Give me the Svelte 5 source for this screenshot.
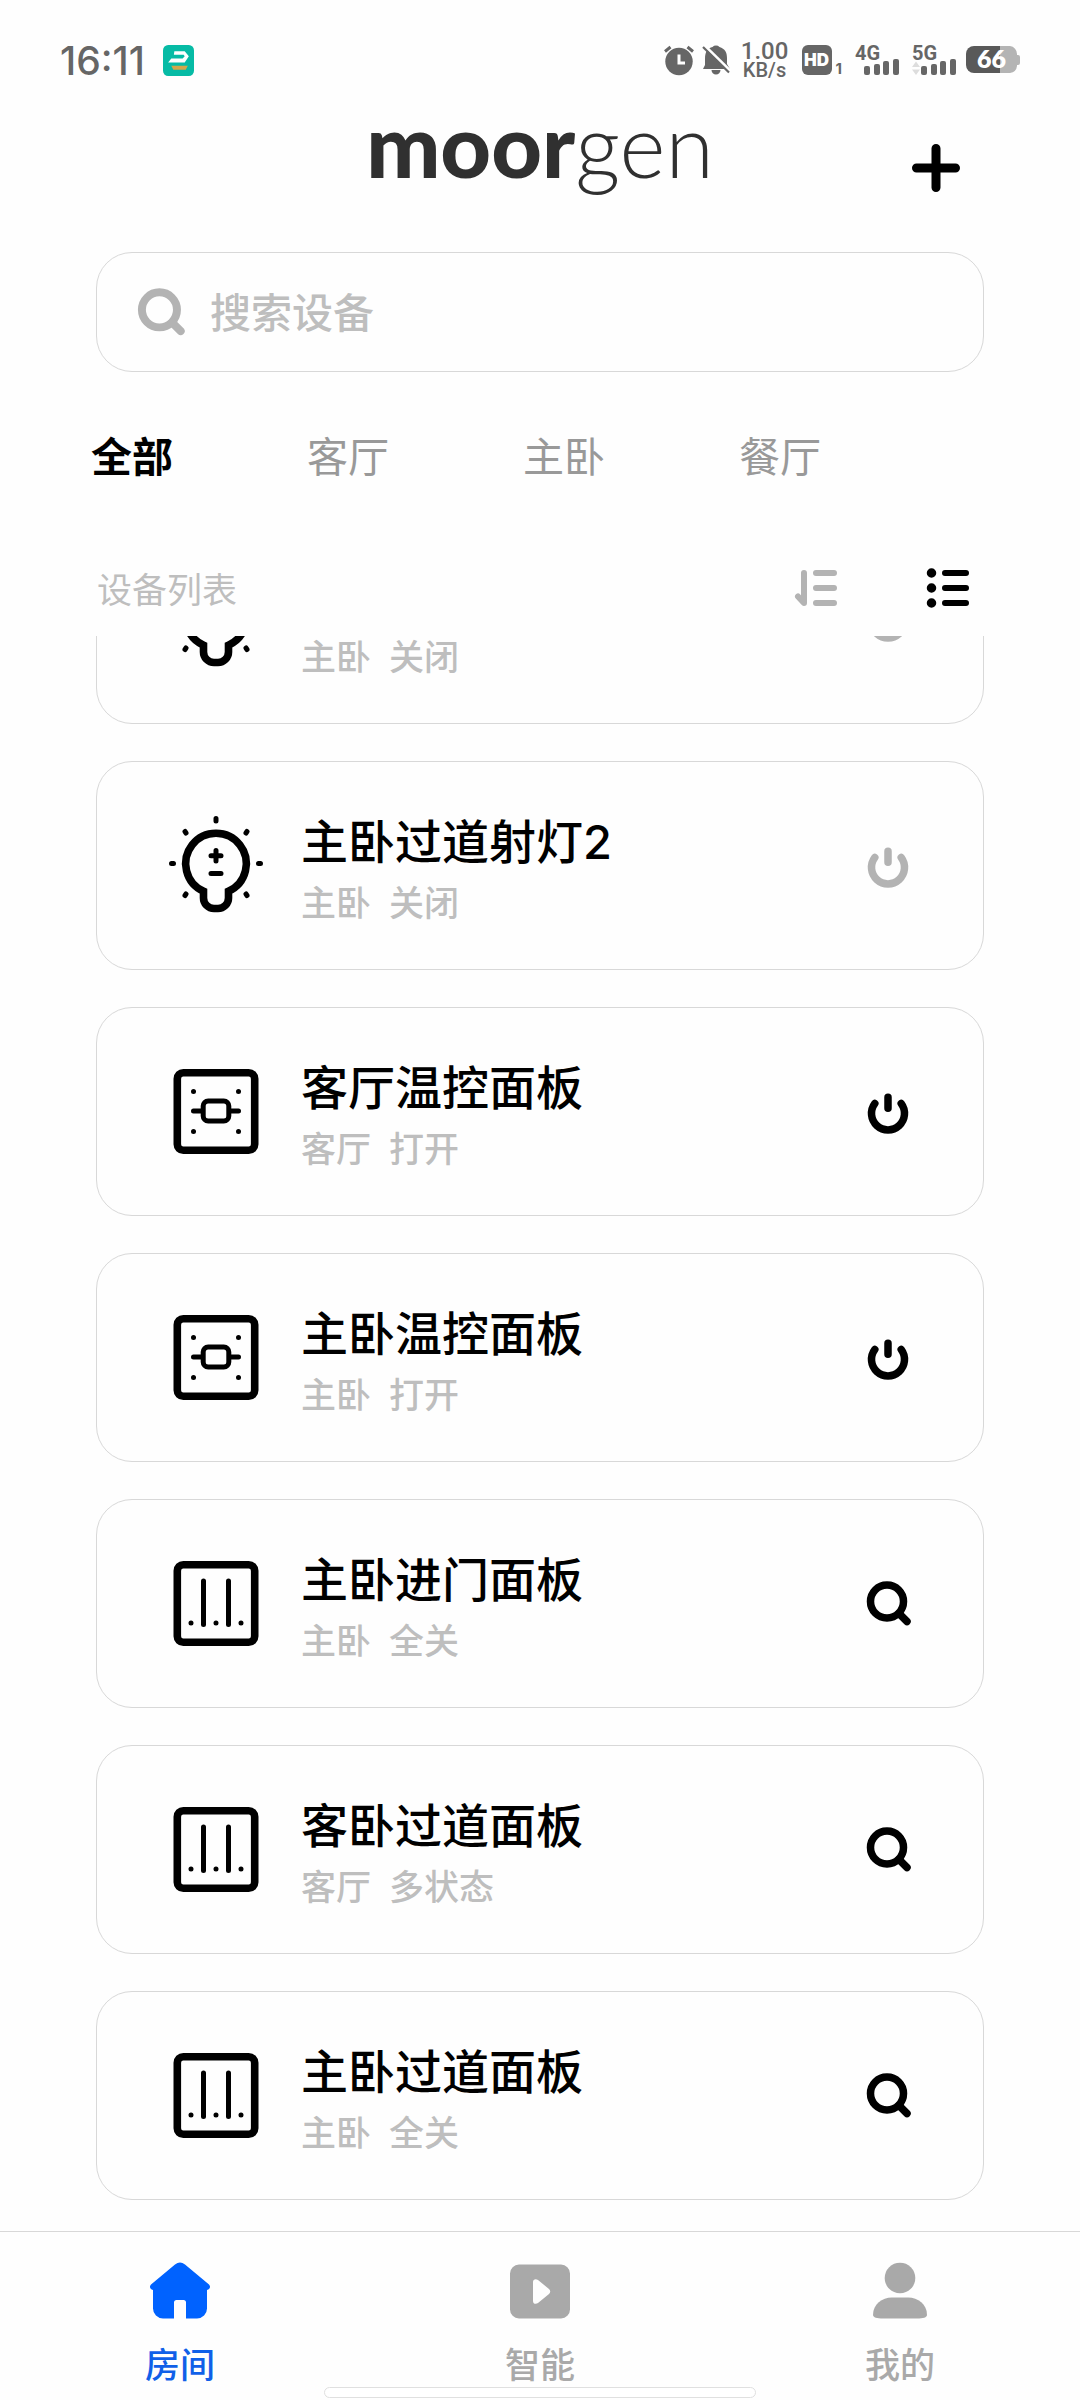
<script>
  const rooms = ['全部', '客厅', '主卧', '餐厅'];
  let activeRoom = $state('全部');
  let query = $state('');

  const devices = [
    { name: '主卧过道射灯1', room: '主卧', status: '关闭', icon: 'bulb', action: 'power', on: false },
    { name: '主卧过道射灯2', room: '主卧', status: '关闭', icon: 'bulb', action: 'power', on: false },
    { name: '客厅温控面板', room: '客厅', status: '打开', icon: 'thermostat', action: 'power', on: true },
    { name: '主卧温控面板', room: '主卧', status: '打开', icon: 'thermostat', action: 'power', on: true },
    { name: '主卧进门面板', room: '主卧', status: '全关', icon: 'switch', action: 'detail', on: true },
    { name: '客卧过道面板', room: '客厅', status: '多状态', icon: 'switch', action: 'detail', on: true },
    { name: '主卧过道面板', room: '主卧', status: '全关', icon: 'switch', action: 'detail', on: true }
  ];
</script>

{#snippet magnifier()}
  <svg class="magnifier" viewBox="0 0 48 48" aria-hidden="true">
    <circle cx="23" cy="21.5" r="16.5" />
    <path d="M35 33.5 43 41.5" />
  </svg>
{/snippet}

{#snippet signal(label, arrows)}
  <svg class="signal" viewBox="0 0 46 34" role="img" aria-label={label}>
    <text x="0" y="17">{label}</text>
    {#if arrows}
      <path class="faint" d="M0 24 4 18.500 8 24zM0 26.500h8l-4 5.500z" />
    {/if}
    <rect x="9" y="23" width="6" height="9" rx="2" />
    <rect x="19" y="21" width="6" height="11" rx="2" />
    <rect x="28" y="18" width="6" height="14" rx="2" />
    <rect x="38" y="16" width="6" height="16" rx="2" />
  </svg>
{/snippet}

<div class="app">
  <div class="status">
    <span class="time">16:11</span>
    <svg class="badge" viewBox="0 0 30 30" aria-hidden="true">
      <rect width="30" height="30" rx="5" fill="#06bba5" />
      <path d="M11 6h10l4 5-4 6H5l3-4h11l2-2-1-1.500h-9.500z" fill="#fff" />
      <path d="M8 20h16l-2 4H10z" fill="#d4a64a" />
    </svg>
    <div class="status-right">
      <svg class="alarm" viewBox="0 0 30 32" aria-hidden="true">
        <circle cx="15" cy="17.500" r="13.700" fill="#666" />
        <path d="M1 7.500 6.500 3M29 7.500 23.500 3" stroke="#666" stroke-width="3" />
        <path d="M15 10.500V19h6" fill="none" stroke="#fff" stroke-width="3" />
      </svg>
      <svg class="bell" viewBox="0 0 28 32" aria-hidden="true">
        <path d="M3 15C3 7 6 4 10.500 3a5 5 0 0 1 7 0C23 5 25 8 25 14v6l3 5H1l2-4zM9.500 26h9a4.500 4.500 0 0 1-9 0z" fill="#666" />
        <path d="M2.500 1.500 28.500 27" stroke="#fff" stroke-width="3" />
        <path d="M1 3 27 28.500" stroke="#666" stroke-width="2.200" />
      </svg>
      <div class="speed"><span class="rate">1.00</span><span class="unit">KB/s</span></div>
      <div class="hd"><span class="hd-box">HD</span><span class="hd-sim">1</span></div>
      {@render signal('4G', false)}
      {@render signal('5G', true)}
      <svg class="battery" viewBox="0 0 54 28" role="img" aria-label="66">
        <path d="M34 0h10a8 8 0 0 1 7 8v1h1a2 2 0 0 1 2 2v6a2 2 0 0 1-2 2h-1v1a8 8 0 0 1-7 7H34z" fill="#b4b4b4" />
        <path d="M34 0H8a8 8 0 0 0-8 8v11a8 8 0 0 0 8 8h26z" fill="#595959" />
        <text x="25.500" y="22" text-anchor="middle">66</text>
      </svg>
    </div>
  </div>

  <header>
    <h1><b>moor</b><span>gen</span></h1>
    <button class="add" aria-label="添加设备">
      <svg viewBox="0 0 48 48" aria-hidden="true"><path d="M24 4.500v39M4.500 24h39" /></svg>
    </button>
  </header>

  <label class="search">
    {@render magnifier()}
    <input type="text" placeholder="搜索设备" aria-label="搜索设备" bind:value={query} />
  </label>

  <nav class="rooms" aria-label="房间筛选">
    {#each rooms as room}
      <button class:active={room === activeRoom} onclick={() => (activeRoom = room)}>{room}</button>
    {/each}
  </nav>

  <div class="list-head">
    <h2>设备列表</h2>
    <button class="muted" aria-label="排序">
      <svg viewBox="0 0 48 48" aria-hidden="true">
        <path d="M12 9v30l-6-6.500M24 9h18M24 24h18M24 39h18" />
      </svg>
    </button>
    <button aria-label="列表视图">
      <svg viewBox="0 0 48 48" aria-hidden="true">
        <path d="M21 9h21M21 24h21M21 39h21" />
        <path class="dots" d="M7.500 9h.01M7.500 24h.01M7.500 39h.01" />
      </svg>
    </button>
  </div>

  <main>
    {#each devices as d}
      <article>
        <svg class="device" viewBox="0 0 96 100" aria-hidden="true">
          {#if d.icon === 'bulb'}
            <path
              class="thick"
              d="M35.500 75.200A30.300 30.300 0 1 1 60.500 75.200V82a10.500 10.500 0 0 1-10.500 10.500H46A10.500 10.500 0 0 1 35.500 82z"
            />
            <path d="M48 2.500v2.500M3.500 47.500h2M90.500 47.500h2M17 15.500l1 1.500M79 15.500l-1 1.500M17 79.500l1-1.500M79 79.500l-1-1.500" />
            <path d="M48 34.500v10.500M43 39.700h10M43 57.500h10" />
          {:else}
            <rect class="thick" x="9.300" y="10.800" width="77.400" height="77.400" rx="6" />
            {#if d.icon === 'thermostat'}
              <rect x="35.200" y="39" width="25.600" height="20" rx="5" />
              <path d="M25.500 49h9M61.500 49h9M25.500 29.500h.01M70.500 29.500h.01M25.500 69.500h.01M70.500 69.500h.01" />
            {:else}
              <path d="M35.500 27v43.500M60.500 27v43.500M23 69h.01M48 69h.01M73 69h.01" />
            {/if}
          {/if}
        </svg>
        <div class="info">
          <h3>{d.name}</h3>
          <p><span>{d.room}</span><span>{d.status}</span></p>
        </div>
        <button class:muted={!d.on} aria-label={d.action === 'power' ? '开关' : '查看'}>
          {#if d.action === 'power'}
            <svg viewBox="0 0 48 48" aria-hidden="true">
              <path class="power" d="M24 9.300v11M10.800 15.500a16.500 16.500 0 1 0 26.400 0" />
            </svg>
          {:else}
            {@render magnifier()}
          {/if}
        </button>
      </article>
    {/each}
  </main>

  <footer>
    <a href="#rooms" class="current">
      <svg viewBox="0 0 60 60" aria-hidden="true">
        <path
          d="M25 3.500a8 8 0 0 1 10 0L59 23.500c2 2 1 5-2 5.500V47.500a10 10 0 0 1-10 10H36V41.500q0-2.500-2.500-2.500h-7q-2.500 0-2.500 2.500V57.500H13a10 10 0 0 1-10-10V29C0 28.500-1 25.500 1 23.500z"
        />
      </svg>
      <span>房间</span>
    </a>
    <a href="#smart">
      <svg viewBox="0 0 60 60" aria-hidden="true">
        <path
          fill-rule="evenodd"
          d="M9 3.500h42a9 9 0 0 1 9 9v36a9 9 0 0 1-9 9H9a9 9 0 0 1-9-9v-36a9 9 0 0 1 9-9zM23 21v19c0 3 3 3.500 5 2l11-9q2.500-2.500 0-5L28 19c-2-1.500-5-1-5 2z"
        />
      </svg>
      <span>智能</span>
    </a>
    <a href="#mine">
      <svg viewBox="0 0 60 60" aria-hidden="true">
        <circle cx="30" cy="17" r="15.300" />
        <path d="M3 54C3 43 12 36.500 22 36.500h16c10 0 19 6.500 19 17.500 0 2.500-4 3.500-10 3.500H13C7 57.500 3 56.500 3 54z" />
      </svg>
      <span>我的</span>
    </a>
    <div class="handle"></div>
  </footer>
</div>

<style>
  :global(body) {
    margin: 0;
    background: #fefefe;
  }

  .app {
    display: flex;
    flex-direction: column;
    height: 100vh;
    overflow: hidden;
    color: #000;
    font-family: Inter, 'Noto Sans CJK SC', sans-serif;
  }

  h1,
  h2,
  h3,
  p {
    margin: 0;
  }

  button {
    padding: 0;
    border: 0;
    background: none;
    color: inherit;
    font: inherit;
    cursor: pointer;
  }

  svg {
    display: block;
    flex: none;
    overflow: visible;
  }

  .status {
    display: flex;
    align-items: center;
    height: 120px;
    padding: 0 60px;
    color: #666;
  }

  .time {
    font-size: 39px;
    font-weight: 500;
  }

  .badge {
    width: 31px;
    height: 31px;
    margin-left: 18px;
  }

  .status-right {
    display: flex;
    align-items: center;
    margin-left: auto;
  }

  .alarm {
    width: 30px;
    height: 32px;
  }

  .bell {
    width: 28px;
    height: 32px;
    margin-left: 8px;
  }

  .speed {
    display: flex;
    flex-direction: column;
    align-items: center;
    width: 48px;
    margin-left: 11px;
    font-family: Roboto, sans-serif;
    font-weight: 500;
  }

  .rate {
    font-size: 24px;
    line-height: 20px;
  }

  .unit {
    font-size: 20px;
    line-height: 18px;
  }

  .hd {
    display: flex;
    align-items: flex-end;
    gap: 4px;
    margin: 0 2px 0 13px;
  }

  .hd-box {
    width: 30px;
    border-radius: 6px;
    background: #666;
    color: #fff;
    font-size: 17px;
    font-weight: 900;
    line-height: 30px;
    text-align: center;
  }

  .hd-sim {
    font-size: 15px;
    font-weight: 700;
    line-height: 13px;
  }

  .signal {
    width: 46px;
    height: 34px;
    margin-left: 11px;
    fill: #666;
  }

  .signal text {
    font-size: 20px;
    font-weight: 700;
    font-family: Roboto, sans-serif;
  }

  .signal .faint {
    fill: #ddd;
  }

  .battery {
    width: 54px;
    height: 28px;
    margin-left: 8px;
  }

  .battery text {
    fill: #fff;
    font-size: 25px;
    font-weight: 800;
    font-family: Lato, sans-serif;
  }

  header {
    display: flex;
    justify-content: center;
    position: relative;
    height: 96px;
    margin-bottom: 36px;
  }

  h1 {
    color: #303030;
    font-family: Lato, sans-serif;
    font-size: 88px;
    line-height: 48px;
    white-space: nowrap;
  }

  h1 b {
    font-weight: 900;
  }

  h1 span {
    font-weight: 300;
  }

  .add {
    position: absolute;
    right: 120px;
    top: 24px;
  }

  .add svg {
    width: 48px;
    height: 48px;
    fill: none;
    stroke: #000;
    stroke-width: 9;
    stroke-linecap: round;
  }

  .search {
    display: flex;
    align-items: center;
    gap: 24px;
    box-sizing: border-box;
    height: 120px;
    flex: none;
    margin: 0 96px;
    padding: 0 38px;
    border: 1px solid #d8d8d8;
    border-radius: 36px;
    color: #b3b3b3;
  }

  .search input {
    flex: 1;
    min-width: 0;
    padding: 2px 0 0;
    border: 0;
    outline: 0;
    background: none;
    color: #000;
    font: inherit;
    font-size: 41px;
    font-weight: 500;
  }

  .search input::placeholder {
    color: #bebebe;
    opacity: 1;
  }

  .magnifier {
    width: 48px;
    height: 48px;
    fill: none;
    stroke: currentColor;
    stroke-width: 7.5;
    stroke-linecap: round;
  }

  .search :global(.magnifier) {
    width: 51px;
    height: 51px;
  }

  .rooms {
    display: grid;
    grid-template-columns: repeat(4, 20vw);
    flex: none;
    padding: 55px 24px 53px;
  }

  .rooms button {
    color: #999;
    font-size: 41px;
    line-height: 60px;
  }

  .rooms .active {
    color: #000;
    font-weight: 700;
  }

  .list-head {
    display: flex;
    align-items: center;
    flex: none;
    gap: 84px;
    height: 96px;
    padding: 0 108px 0 97px;
  }

  .list-head h2 {
    margin-right: auto;
    padding-bottom: 2px;
    color: #bebebe;
    font-size: 35px;
    font-weight: 400;
  }

  .list-head svg {
    width: 48px;
    height: 48px;
    fill: none;
    stroke: currentColor;
    stroke-width: 6;
    stroke-linecap: round;
    stroke-linejoin: round;
  }

  .list-head .dots {
    stroke-width: 9.5;
  }

  button.muted {
    color: #b3b3b3;
  }

  main {
    display: flex;
    flex: 1;
    flex-direction: column;
    justify-content: flex-end;
    gap: 37px;
    min-height: 0;
    overflow: hidden;
    padding: 0 96px 31px;
  }

  article {
    display: flex;
    align-items: center;
    gap: 37px;
    box-sizing: border-box;
    height: 209px;
    flex: none;
    padding: 0 71px;
    border: 1px solid #d8d8d8;
    border-radius: 36px;
  }

  .device {
    width: 96px;
    height: 100px;
    fill: none;
    stroke: #000;
    stroke-width: 5;
    stroke-linecap: round;
  }

  .thick {
    stroke-width: 7.6;
  }

  .info {
    display: flex;
    flex: 1;
    flex-direction: column;
    gap: 12px;
    padding-top: 13px;
  }

  h3 {
    font-size: 47px;
    font-weight: 500;
    line-height: 50px;
  }

  p {
    display: flex;
    gap: 18px;
    color: #bebebe;
    font-size: 35px;
    font-weight: 500;
    line-height: 48px;
  }

  article button svg {
    width: 48px;
    height: 48px;
  }

  .power {
    fill: none;
    stroke: currentColor;
    stroke-width: 7.5;
    stroke-linecap: round;
  }

  footer {
    display: flex;
    position: relative;
    box-sizing: border-box;
    height: 169px;
    flex: none;
    border-top: 1px solid #d8d8d8;
  }

  footer a {
    display: flex;
    flex: 1;
    flex-direction: column;
    align-items: center;
    gap: 20px;
    padding-top: 29px;
    color: #a9a9a9;
    fill: #a9a9a9;
    font-size: 35px;
    font-weight: 500;
    line-height: 48px;
    text-decoration: none;
  }

  footer .current {
    color: #1060e8;
    fill: #0062ff;
  }

  footer svg {
    width: 60px;
    height: 60px;
  }

  .handle {
    position: absolute;
    bottom: 2px;
    left: 30%;
    right: 30%;
    height: 9px;
    border: 1px solid #e0e0e0;
    border-radius: 6px;
    background: #fff;
  }
</style>
